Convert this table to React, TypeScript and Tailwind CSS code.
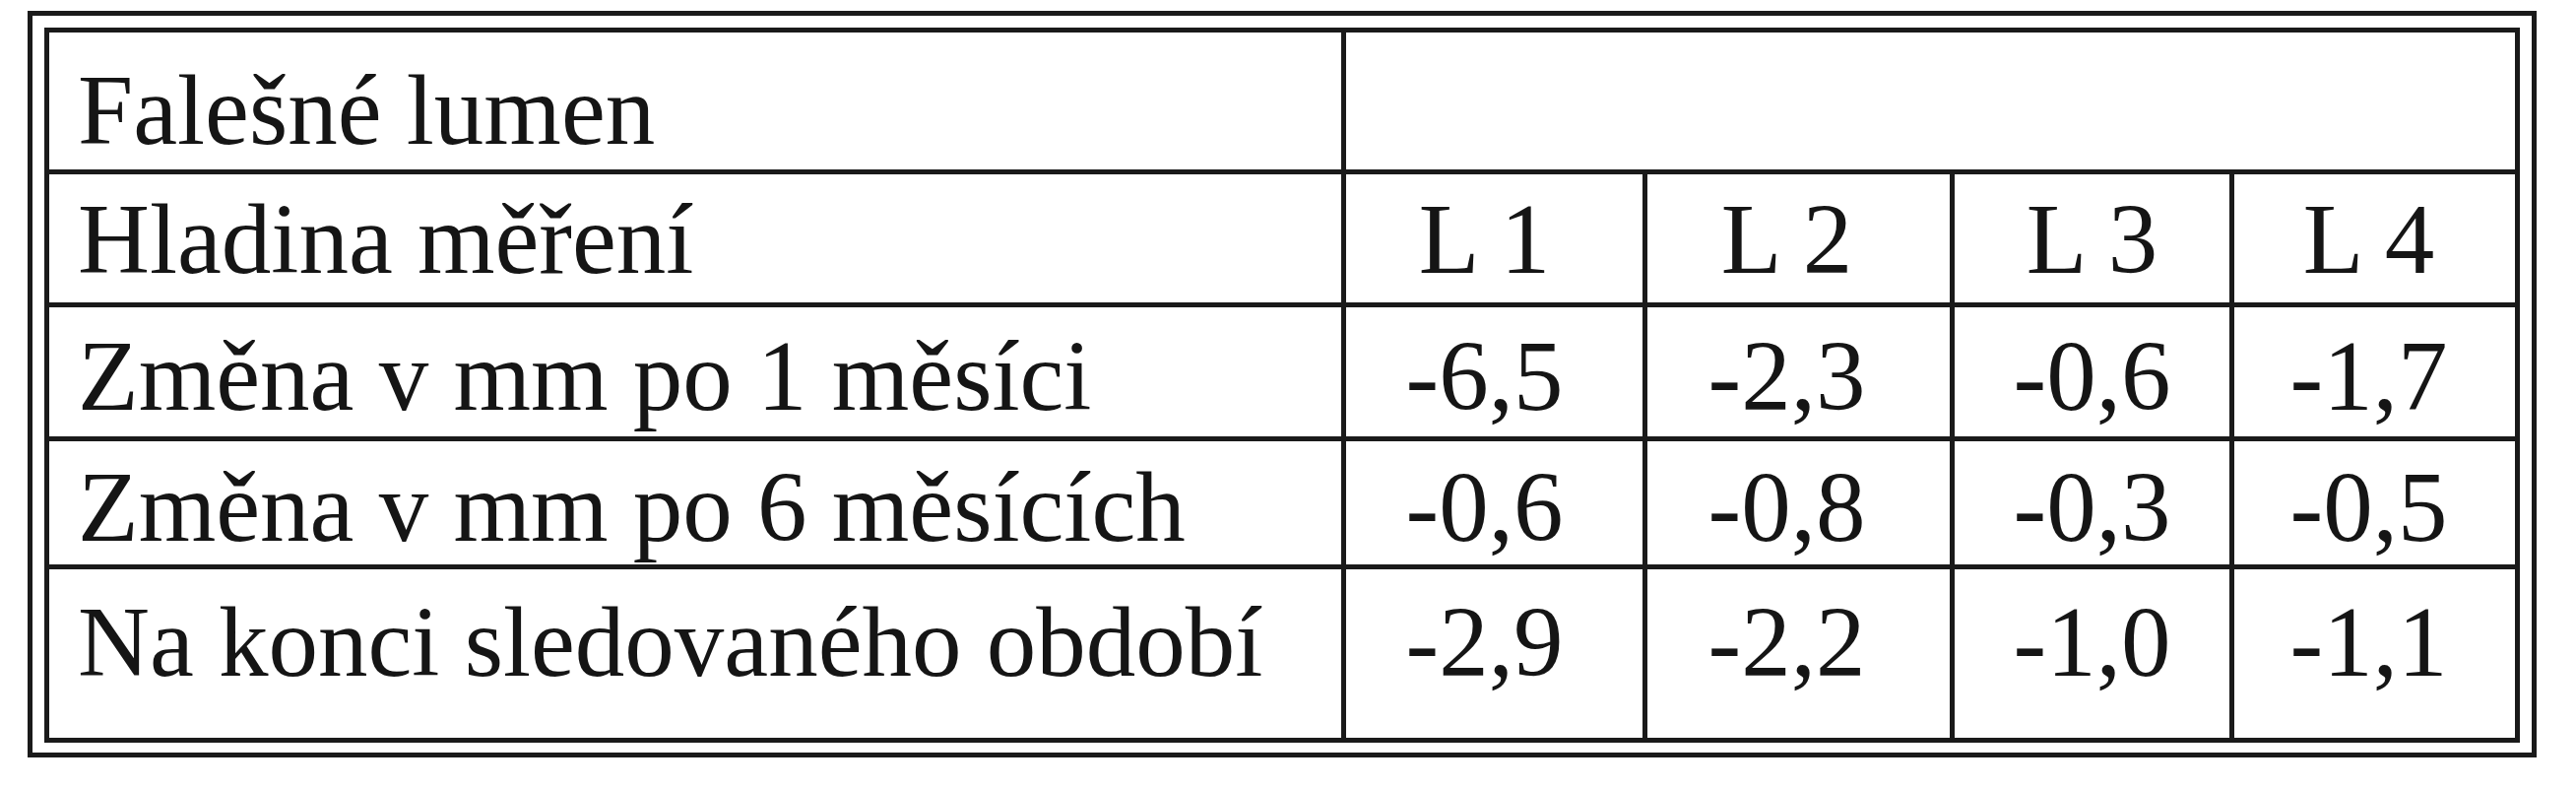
import React from "react";

const rows: { label: string; values: string[]; h: string; pt: string }[] = [
  { label: "Hladina měření", values: ["L 1", "L 2", "L 3", "L 4"], h: "h-[135px]", pt: "pt-[16px]" },
  { label: "Změna v mm po 1 měsíci", values: ["-6,5", "-2,3", "-0,6", "-1,7"], h: "h-[136px]", pt: "pt-[20px]" },
  { label: "Změna v mm po 6 měsících", values: ["-0,6", "-0,8", "-0,3", "-0,5"], h: "h-[130px]", pt: "pt-[17px]" },
  { label: "Na konci sledovaného období", values: ["-2,9", "-2,2", "-1,0", "-1,1"], h: "h-[176px]", pt: "pt-[24px]" },
];

const colCls = [
  "w-[306px] pr-[20px]",
  "w-[312px] pr-[24px]",
  "w-[284px] pr-[0px]",
  "w-[290px] pr-[12px]",
];

export default function App() {
  return (
    <div className="w-[2616px] h-[800px] bg-white font-['Liberation_Serif',serif] text-[101px] leading-none text-[#151515]">
      <div className="ml-[28px] mt-[11px] w-[2548px] h-[758px] border-[5px] border-[#1a1a1a] pt-[12px] pl-[12px] pr-[12px] pb-[10px]">
        <div className="w-[2514px] h-[726px] border-[5px] border-[#1a1a1a] flex flex-col">
          <div className="flex h-[139px]">
            <div className="w-[1312px] pl-[29px] pt-[29px] whitespace-nowrap">Falešné lumen</div>
            <div className="w-[1192px] border-l-[5px] border-[#1a1a1a]" />
          </div>
          {rows.map((r) => (
            <div key={r.label} className={`flex border-t-[5px] border-[#1a1a1a] ${r.h}`}>
              <div className={`w-[1312px] pl-[29px] whitespace-nowrap ${r.pt}`}>{r.label}</div>
              {r.values.map((v, i) => (
                <div
                  key={i}
                  className={`border-l-[5px] border-[#1a1a1a] flex justify-center whitespace-nowrap ${colCls[i]} ${r.pt}`}
                >
                  {v}
                </div>
              ))}
            </div>
          ))}
        </div>
      </div>
    </div>
  );
}
